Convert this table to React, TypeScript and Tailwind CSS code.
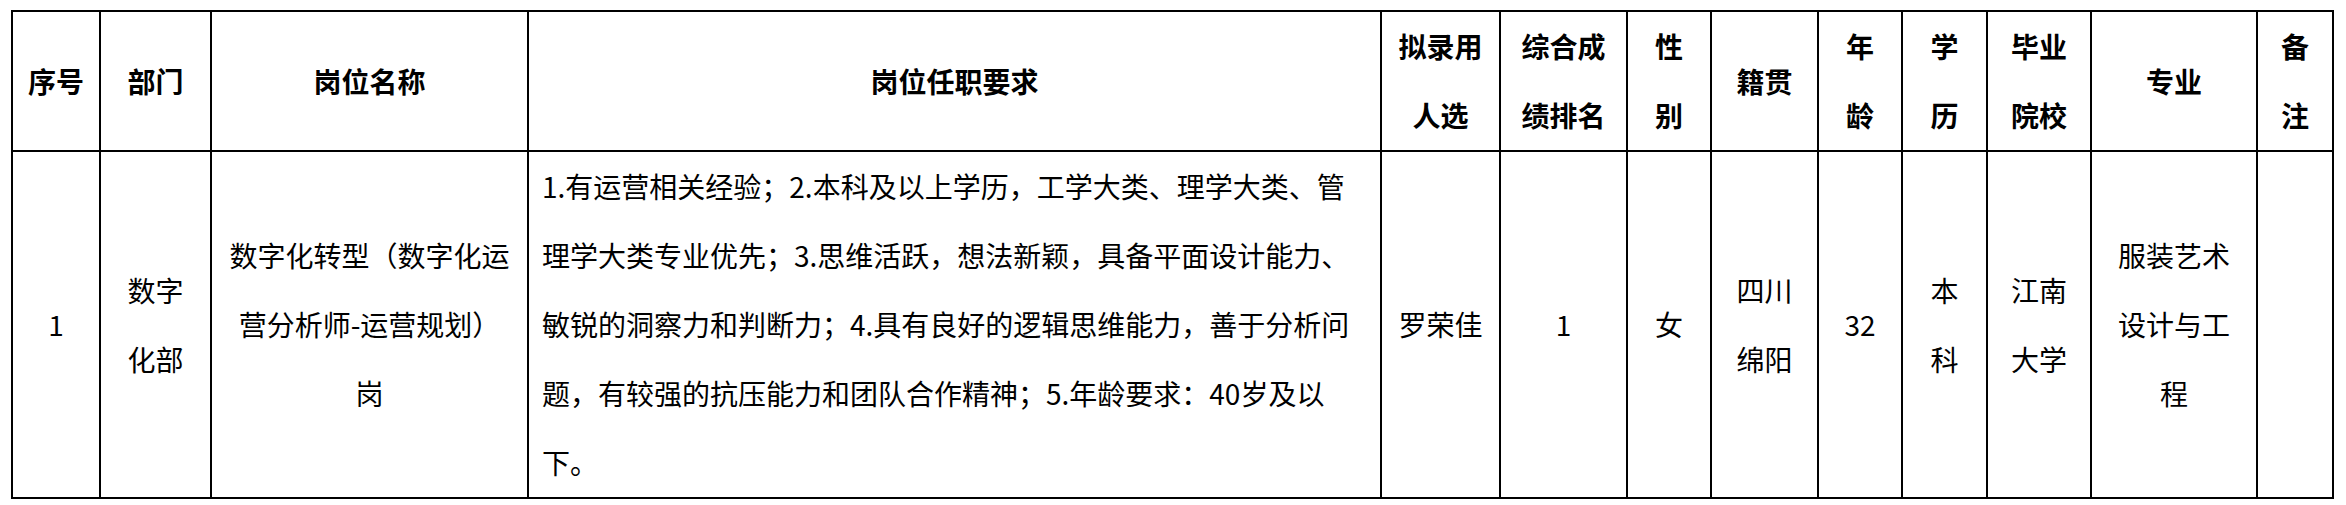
export default function App() {
  const head = "border-2 border-black text-center align-middle font-bold p-0"
  const cell = "border-2 border-black text-center align-middle p-0"

  return (
    <div className="w-[2346px] h-[505px] bg-white pt-[10px] pl-[11px] font-['Noto_Sans_CJK_SC',sans-serif] text-black text-[28px] leading-[69px]">
      <table className="table-fixed border-collapse w-[2321px]">
        <colgroup>
          <col className="w-[88px]" />
          <col className="w-[111px]" />
          <col className="w-[317px]" />
          <col className="w-[853px]" />
          <col className="w-[119px]" />
          <col className="w-[127px]" />
          <col className="w-[84px]" />
          <col className="w-[107px]" />
          <col className="w-[84px]" />
          <col className="w-[85px]" />
          <col className="w-[104px]" />
          <col className="w-[166px]" />
          <col className="w-[76px]" />
        </colgroup>
        <thead>
          <tr className="h-[138px]">
            <th className={head}>序号</th>
            <th className={head}>部门</th>
            <th className={head}>岗位名称</th>
            <th className={head}>岗位任职要求</th>
            <th className={head}>拟录用<br />人选</th>
            <th className={head}>综合成<br />绩排名</th>
            <th className={head}>性<br />别</th>
            <th className={head}>籍贯</th>
            <th className={head}>年<br />龄</th>
            <th className={head}>学<br />历</th>
            <th className={head}>毕业<br />院校</th>
            <th className={head}>专业</th>
            <th className={head}>备<br />注</th>
          </tr>
        </thead>
        <tbody>
          <tr className="h-[346px]">
            <td className={cell}>1</td>
            <td className={cell}>数字<br />化部</td>
            <td className={cell}>
              数字化转型（数字化运<br />营分析师-运营规划）<br />岗
            </td>
            <td className="border-2 border-black text-left align-middle pl-[13px] pr-0 py-0 whitespace-nowrap">
              1.有运营相关经验；2.本科及以上学历，工学大类、理学大类、管<br />
              理学大类专业优先；3.思维活跃，想法新颖，具备平面设计能力、<br />
              敏锐的洞察力和判断力；4.具有良好的逻辑思维能力，善于分析问<br />
              题，有较强的抗压能力和团队合作精神；5.年龄要求：40岁及以<br />
              下。
            </td>
            <td className={cell}>罗荣佳</td>
            <td className={cell}>1</td>
            <td className={cell}>女</td>
            <td className={cell}>四川<br />绵阳</td>
            <td className={cell}>32</td>
            <td className={cell}>本<br />科</td>
            <td className={cell}>江南<br />大学</td>
            <td className={cell}>服装艺术<br />设计与工<br />程</td>
            <td className={cell}></td>
          </tr>
        </tbody>
      </table>
    </div>
  )
}
